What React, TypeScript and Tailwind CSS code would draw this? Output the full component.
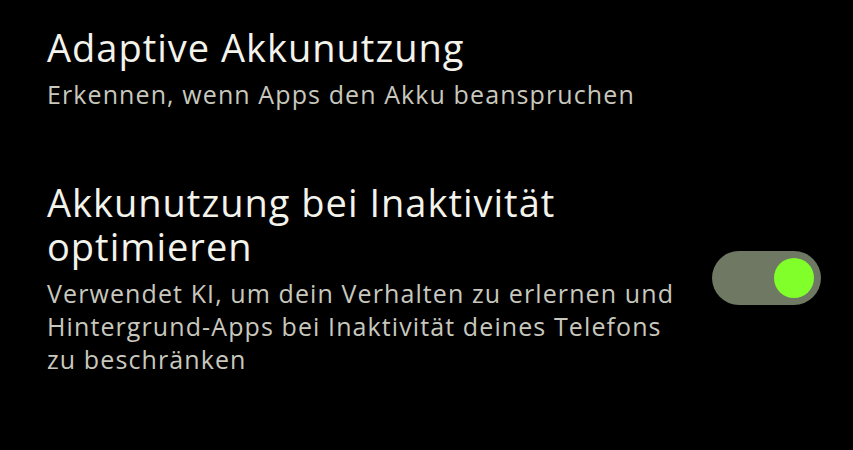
import { useState } from "react";

function Toggle({ on, onChange }: { on: boolean; onChange: (v: boolean) => void }) {
  return (
    <button
      type="button"
      role="switch"
      aria-checked={on}
      onClick={() => onChange(!on)}
      className={`flex h-[54px] w-[109px] shrink-0 items-center rounded-full px-[7px] ${
        on ? "justify-end bg-[#6e7862]" : "justify-start bg-[#3a3d36]"
      }`}
    >
      <span
        className={`block h-[40px] w-[40px] rounded-full ${
          on ? "bg-[#80ff2a]" : "bg-[#9a9a92]"
        }`}
      />
    </button>
  );
}

function SettingRow({
  title,
  summary,
  toggle,
}: {
  title: string;
  summary: string;
  toggle?: React.ReactNode;
}) {
  return (
    <div className="flex items-center gap-[36px]">
      <div className="flex-1">
        <div className="text-[38px] leading-[44px] tracking-[1px] text-[#f3f3ec]">
          {title}
        </div>
        <div className="mt-[9px] text-[25px] leading-[33px] tracking-[1.1px] text-[#c8c8be]">
          {summary}
        </div>
      </div>
      {toggle ?? <div className="w-[109px] shrink-0" />}
    </div>
  );
}

export default function App() {
  const [optimize, setOptimize] = useState(true);

  return (
    <div
      className="h-[450px] w-[853px] overflow-hidden bg-black pl-[47px] pr-[32px] pt-[25px]"
      style={{ fontFamily: "'Open Sans', 'Noto Sans', sans-serif" }}
    >
      <SettingRow
        title="Adaptive Akkunutzung"
        summary="Erkennen, wenn Apps den Akku beanspruchen"
      />
      <div className="mt-[69px]">
        <SettingRow
          title="Akkunutzung bei Inaktivität optimieren"
          summary="Verwendet KI, um dein Verhalten zu erlernen und Hintergrund-Apps bei Inaktivität deines Telefons zu beschränken"
          toggle={<Toggle on={optimize} onChange={setOptimize} />}
        />
      </div>
    </div>
  );
}
